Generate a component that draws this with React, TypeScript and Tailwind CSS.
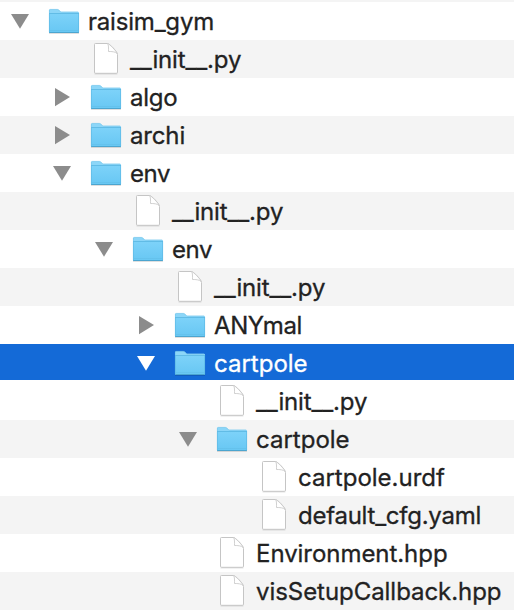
type Kind = "folder" | "file";
type Item = { level: string; kind: Kind; name: string; open?: boolean; selected?: boolean; track: string };

const L0 = "pl-[6px]";
const L1 = "pl-[48px]";
const L2 = "pl-[90px]";
const L3 = "pl-[132px]";
const L4 = "pl-[174px]";
const L5 = "pl-[216px]";

const items: Item[] = [
  { level: L0, kind: "folder", name: "raisim_gym", open: true, track: "tracking-[-0.2px]" },
  { level: L1, kind: "file", name: "__init__.py", track: "tracking-[-0.15px]" },
  { level: L1, kind: "folder", name: "algo", track: "tracking-[-0.25px]" },
  { level: L1, kind: "folder", name: "archi", track: "tracking-[-0.15px]" },
  { level: L1, kind: "folder", name: "env", open: true, track: "tracking-[-0.4px]" },
  { level: L2, kind: "file", name: "__init__.py", track: "tracking-[-0.15px]" },
  { level: L2, kind: "folder", name: "env", open: true, track: "tracking-[-0.4px]" },
  { level: L3, kind: "file", name: "__init__.py", track: "tracking-[-0.15px]" },
  { level: L3, kind: "folder", name: "ANYmal", track: "tracking-[-0.4px]" },
  { level: L3, kind: "folder", name: "cartpole", open: true, selected: true, track: "tracking-[0px]" },
  { level: L4, kind: "file", name: "__init__.py", track: "tracking-[-0.15px]" },
  { level: L4, kind: "folder", name: "cartpole", open: true, track: "tracking-[0px]" },
  { level: L5, kind: "file", name: "cartpole.urdf", track: "tracking-[0px]" },
  { level: L5, kind: "file", name: "default_cfg.yaml", track: "tracking-[-0.25px]" },
  { level: L4, kind: "file", name: "Environment.hpp", track: "tracking-[-0.05px]" },
  { level: L4, kind: "file", name: "visSetupCallback.hpp", track: "tracking-[-0.05px]" },
];

function Disclosure({ open, selected }: { open?: boolean; selected?: boolean }) {
  return (
    <svg viewBox="0 0 42 38" className={`h-[38px] w-[42px] shrink-0 ${selected ? "text-white" : "text-[#8c8c8c]"}`}>
      <path fill="currentColor" d={open ? "M5 12H23L14 26.7Z" : "M7 10V28.2L22 19.1Z"} />
    </svg>
  );
}

function FolderIcon() {
  return (
    <svg viewBox="0 0 32 38" className="h-[38px] w-8 shrink-0">
      <defs>
        <linearGradient id="folderFront" x1="0" y1="0" x2="0" y2="1">
          <stop offset="0" stopColor="#7dd2f9" />
          <stop offset="1" stopColor="#67c7f3" />
        </linearGradient>
      </defs>
      <path d="M1 30.5H31V31.8H1Z" fill="#000" opacity=".16" />
      <path d="M1 8.3Q1 7.2 2.1 7.2H9.3Q10.2 7.2 10.8 7.8L12.3 9.3Q12.8 9.8 13.6 9.8H30Q31 9.8 31 10.8V30.8H1Z" fill="#8cd6f8" />
      <path d="M1.4 11V8.5Q1.4 7.4 2.4 7.4H9.3Q10.2 7.4 10.8 8L12.3 9.6Q12.8 10.1 13.6 10.1H30" fill="none" stroke="#74c4e9" strokeWidth=".6" />
      <path d="M1 11.5H31V30Q31 31 30 31H2Q1 31 1 30Z" fill="url(#folderFront)" />
      <path d="M1 11.5H31" stroke="#5eb9e3" strokeWidth=".9" />
      <path d="M2 28.5H30" stroke="#61bee8" strokeWidth=".6" />
      <path d="M1.2 30.5H30.8" stroke="#4ca5cf" strokeWidth="1" />
      <path d="M1.4 11.5V30M30.6 11V30" stroke="#5db9e4" strokeWidth=".7" />
    </svg>
  );
}

function FileIcon() {
  return (
    <svg viewBox="0 0 32 38" className="h-[38px] w-8 shrink-0">
      <defs>
        <linearGradient id="foldShade" x1="0" y1="1" x2="1" y2="0">
          <stop offset=".5" stopColor="#fff" />
          <stop offset="1" stopColor="#e2e2e2" />
        </linearGradient>
      </defs>
      <path d="M4.6 33.9H27.4" stroke="#000" strokeOpacity=".15" strokeWidth="1" />
      <path d="M4.5 4.4Q4.5 3.5 5.4 3.5H17.5C19.5 3.5 27.5 11.8 27.5 14.5V32.2Q27.5 33.3 26.4 33.3H5.5Q4.5 33.3 4.5 32.2Z" fill="#fff" stroke="#c5c5c5" strokeWidth="1" />
      <path d="M17.5 3.5C18.8 5.2 18.5 8.5 18.5 11.5C21.5 11.5 25.3 11.6 27.2 13.5C26 10.5 19.5 4 17.5 3.5Z" fill="url(#foldShade)" stroke="#c5c5c5" strokeWidth=".8" />
    </svg>
  );
}

function Row({ item, striped }: { item: Item; striped: boolean }) {
  const bg = item.selected ? "border-b-2 border-white bg-[#146ad7] text-white" : striped ? "bg-[#f4f4f4]" : "bg-white";
  return (
    <li className={`h-[38px] overflow-hidden ${bg}`}>
      <div className={`flex h-[38px] items-center ${item.level}`}>
        {item.kind === "folder" ? <Disclosure open={item.open} selected={item.selected} /> : <span className="w-[42px] shrink-0" />}
        {item.kind === "folder" ? <FolderIcon /> : <FileIcon />}
        <span className={`ml-2 whitespace-nowrap pt-0.5 leading-[38px] [-webkit-text-stroke:0.3px_currentColor] ${item.track}`}>{item.name}</span>
      </div>
    </li>
  );
}

export default function App() {
  return (
    <main className="h-[614px] w-[514px] overflow-hidden bg-white font-['Inter',sans-serif] text-[24px] text-[#222]">
      <div className="h-0.5 bg-[#f4f4f4]" />
      <ul>
        {items.map((item, i) => (
          <Row key={i} item={item} striped={i % 2 === 1} />
        ))}
      </ul>
    </main>
  );
}
